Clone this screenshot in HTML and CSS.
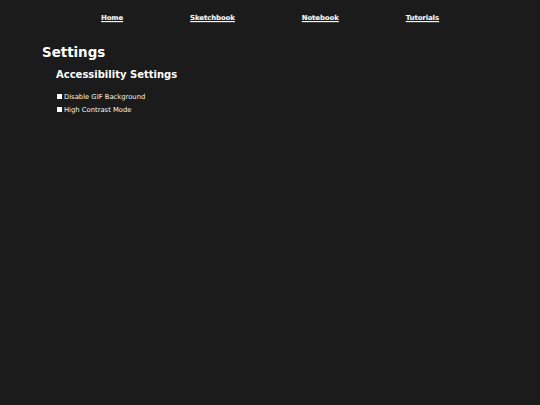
FILE: index.html
```html
<!DOCTYPE html>
<html lang="en">
<head>
<meta charset="utf-8">
<title>Settings</title>
<link rel="stylesheet" href="styles.css">
</head>
<body>
<nav class="topnav">
  <a href="#" class="navlink">Home</a>
  <a href="#" class="navlink">Sketchbook</a>
  <a href="#" class="navlink">Notebook</a>
  <a href="#" class="navlink">Tutorials</a>
</nav>
<main class="page">
  <h1 class="title">Settings</h1>
  <section class="group">
    <h2 class="subtitle">Accessibility Settings</h2>
    <div class="options">
      <label class="option"><input type="checkbox" class="check">Disable GIF Background</label>
      <label class="option"><input type="checkbox" class="check">High Contrast Mode</label>
    </div>
  </section>
</main>
</body>
</html>
```
FILE: styles.css
```css
html, body {
  margin: 0;
  padding: 0;
  background: #1b1b1b;
  color: #ffffff;
  font-family: "DejaVu Sans", Verdana, sans-serif;
}
body {
  min-height: 405px;
}
.topnav {
  display: flex;
  justify-content: center;
  gap: 67px;
  padding-top: 14px;
  font-size: 6.8px;
  font-weight: bold;
}
.navlink {
  color: #f4f4f4;
  text-decoration: underline;
  text-shadow: 0.4px 0.4px 0 #777;
}
.page {
  padding-left: 42px;
  padding-top: 22.6px;
}
.title {
  margin: 0;
  font-size: 13.4px;
  line-height: 16px;
  font-weight: bold;
}
.group {
  padding-left: 14px;
}
.subtitle {
  margin: 8.4px 0 0;
  font-size: 10px;
  line-height: 12px;
  font-weight: bold;
}
.options {
  margin-top: 9.9px;
  display: flex;
  flex-direction: column;
  font-size: 6.8px;
}
.option {
  line-height: 13px;
  color: #f6f6f6;
}
.check {
  appearance: none;
  -webkit-appearance: none;
  display: inline-block;
  width: 5px;
  height: 5px;
  margin: 0 2px 0 1px;
  background: #ffffff;
  border: 0;
  vertical-align: baseline;
}
```
